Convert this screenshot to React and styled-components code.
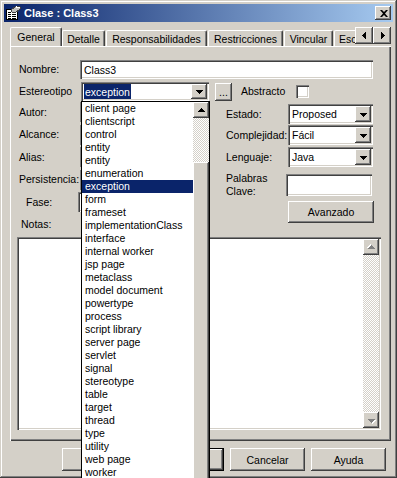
import React from "react";
import styled, { createGlobalStyle, css } from "styled-components";

const face = "#d4d0c8";

const GlobalStyle = createGlobalStyle`
  html, body { margin: 0; padding: 0; background: ${face}; }
  body {
    font-family: "Liberation Sans", Arial, sans-serif;
    font-size: 10.5px;
    color: #000;
  }
  * { box-sizing: border-box; }
`;

const raised = css`
  background: ${face};
  box-shadow: inset -1px -1px #404040, inset 1px 1px #fff, inset -2px -2px #808080;
`;

const sunken = css`
  background: #fff;
  box-shadow: inset 1px 1px #808080, inset 2px 2px #404040, inset -1px -1px #fff,
    inset -2px -2px ${face};
`;

const checker = css`
  background-color: #fff;
  background-image: conic-gradient(${face} 25%, #fff 0 50%, ${face} 0 75%, #fff 0);
  background-size: 2px 2px;
`;

const Window = styled.div`
  position: relative;
  width: 397px;
  height: 478px;
  padding: 4px;
  background: ${face};
  box-shadow: inset -1px -1px #404040, inset 1px 1px ${face}, inset -2px -2px #808080,
    inset 2px 2px #fff;
  overflow: hidden;
`;

const TitleBar = styled.div`
  height: 18px;
  display: flex;
  align-items: center;
  padding: 0 2px 0 1px;
  background: linear-gradient(90deg, #0a246a, #a6caf0);
`;

const Title = styled.span`
  flex: 1;
  margin-left: 3px;
  color: #fff;
  font-weight: bold;
  font-size: 11px;
  white-space: nowrap;
`;

const CloseBtn = styled.div`
  ${raised};
  width: 16px;
  height: 14px;
  display: flex;
  align-items: center;
  justify-content: center;
  padding-left: 1px;
`;

const Body = styled.div`
  padding-top: 5px;
`;

const TabRow = styled.div`
  display: flex;
  align-items: flex-start;
  height: 19px;
  margin-left: 6px;
  width: 382px;
  position: relative;
  z-index: 1;
`;

const TabStrip = styled.div`
  display: flex;
  align-items: flex-end;
  width: 345px;
  height: 19px;
  overflow: hidden;
`;

const Tab = styled.div`
  flex-shrink: 0;
  width: ${(p) => p.$w}px;
  height: ${(p) => (p.$active ? 20 : 16)}px;
  margin-bottom: ${(p) => (p.$active ? -1 : 0)}px;
  margin-right: ${(p) => (p.$active ? 0 : 1)}px;
  background: ${face};
  border-top: 1px solid #fff;
  border-left: 1px solid #fff;
  border-right: 1px solid #404040;
  border-radius: 2px 2px 0 0;
  box-shadow: inset -1px 0 #808080;
  display: flex;
  align-items: center;
  justify-content: ${(p) => (p.$clip ? "flex-start" : "center")};
  padding-left: ${(p) => (p.$clip ? 4 : 0)}px;
  padding-bottom: ${(p) => (p.$active ? 2 : 0)}px;
  white-space: nowrap;
`;

const ArrowPair = styled.div`
  display: flex;
`;

const SmallBtn = styled.div`
  ${raised};
  width: ${(p) => p.$w || 16}px;
  height: ${(p) => p.$h || 16}px;
  display: flex;
  align-items: center;
  justify-content: center;
  flex-shrink: 0;
`;

const Panel = styled.div`
  margin-left: 6px;
  width: 381px;
  height: 395px;
  padding: 14px 0 0 7px;
  background: ${face};
  box-shadow: inset 1px 1px #fff, inset -1px -1px #404040, inset -2px -2px #808080;
`;

const Row = styled.div`
  display: flex;
  align-items: center;
  height: ${(p) => p.$h || 20}px;
  margin-top: ${(p) => p.$mt || 0}px;
  margin-left: ${(p) => p.$ml || 0}px;
`;

const Label = styled.span`
  flex-shrink: 0;
  width: ${(p) => p.$w}px;
  padding-left: ${(p) => p.$pl || 0}px;
  white-space: nowrap;
  line-height: 13px;
`;

const TextBox = styled.div`
  ${sunken};
  width: ${(p) => p.$w}px;
  height: ${(p) => p.$h || 20}px;
  padding: 0 4px;
  display: flex;
  align-items: center;
  flex-shrink: 0;
`;

const Combo = styled.div`
  ${sunken};
  width: ${(p) => p.$w}px;
  height: ${(p) => p.$h || 20}px;
  padding: 2px;
  display: flex;
  align-items: stretch;
  flex-shrink: 0;
`;

const ComboText = styled.span`
  flex: 1;
  display: flex;
  align-items: center;
  padding-left: 2px;
`;

const Selected = styled.span`
  background: #0a246a;
  color: #fff;
  height: 100%;
  display: flex;
  align-items: center;
  padding: 0 1px;
  margin-left: -1px;
`;

const DropBtn = styled.div`
  ${raised};
  width: 16px;
  display: flex;
  align-items: center;
  justify-content: center;
`;

const Button = styled.div`
  ${raised};
  width: ${(p) => p.$w || 75}px;
  height: ${(p) => p.$h || 23}px;
  display: flex;
  align-items: center;
  justify-content: center;
  flex-shrink: 0;
  margin-left: ${(p) => p.$ml || 0}px;
  ${(p) =>
    p.$default &&
    css`
      box-shadow: inset 0 0 0 1px #000, inset -2px -2px #404040, inset 2px 2px #fff,
        inset -3px -3px #808080;
    `}
`;

const CheckBox = styled.div`
  ${sunken};
  width: 13px;
  height: 13px;
`;

const Middle = styled.div`
  display: flex;
  height: 134px;
  margin-top: 1px;
`;

const LeftCol = styled.div`
  width: 203px;
  display: grid;
  grid-auto-rows: 20px;
  row-gap: 2.6px;
  align-items: center;
`;

const RightCol = styled.div`
  margin-left: 6px;
  padding-top: 2px;
  display: flex;
  flex-direction: column;
`;

const Notes = styled.div`
  ${sunken};
  width: 364px;
  height: 193px;
  margin-top: 1px;
  padding: 2px;
  display: flex;
  justify-content: flex-end;
`;

const ScrollCol = styled.div`
  width: 16px;
  display: flex;
  flex-direction: column;
`;

const Track = styled.div`
  ${checker};
  height: ${(p) => (p.$h ? `${p.$h}px` : "auto")};
  flex: ${(p) => (p.$h ? "none" : 1)};
`;

const Thumb = styled.div`
  ${raised};
  flex: 1;
`;

const ButtonRow = styled.div`
  display: flex;
  justify-content: flex-end;
  gap: 6px;
  margin-top: 7px;
  padding-right: 7px;
`;

const DropList = styled.div`
  position: absolute;
  left: 81px;
  top: 101px;
  width: 129px;
  height: 390px;
  border: 1px solid #000;
  background: #fff;
  display: flex;
  z-index: 5;
`;

const Items = styled.div`
  flex: 1;
`;

const Item = styled.div`
  height: 13px;
  line-height: 13px;
  padding-left: 3px;
  white-space: nowrap;
  ${(p) =>
    p.$sel &&
    css`
      background: #0a246a;
      color: #fff;
    `}
`;

const TriSvg = styled.svg`
  display: block;
  transform: rotate(${(p) => p.$rot}deg);
  ${(p) => p.$dim && "filter: drop-shadow(1px 1px 0 #fff);"}
`;

function Tri({ dir = "down", dim }) {
  const rot = { down: 0, up: 180, left: 90, right: -90 }[dir];
  return (
    <TriSvg width="7" height="7" viewBox="0 0 7 7" $rot={rot} $dim={dim}>
      <path
        d="M0 2h7v1h-1v1h-1v1h-1v1h-1v-1h-1v-1h-1v-1h-1z"
        fill={dim ? "#808080" : "#000"}
        shapeRendering="crispEdges"
      />
    </TriSvg>
  );
}

function AppIcon() {
  return (
    <svg width="16" height="16" viewBox="0 0 16 16" shapeRendering="crispEdges">
      <rect x="1.5" y="4.5" width="11" height="10" fill="#fff" stroke="#000" />
      <path d="M3 7h3M7 7h4M3 9h3M7 9h4M3 11h3M7 11h4M3 13h3M7 13h4" stroke="#000" />
      <path d="M6 5 L11 1 L15 2 L15 4 L10 8 L7 7 Z" fill="#c0c0c0" stroke="#404040" />
      <path d="M11 1 L12 3 L15 2" fill="none" stroke="#fff" />
    </svg>
  );
}

function CloseX() {
  return (
    <svg width="8" height="7" viewBox="0 0 8 7">
      <path d="M0 0h2l2 2 2-2h2L5 3.5 8 7H6L4 5 2 7H0l3-3.5z" fill="#000" />
    </svg>
  );
}

const tabs = [
  { t: "General", w: 52, active: true },
  { t: "Detalle", w: 43 },
  { t: "Responsabilidades", w: 101 },
  { t: "Restricciones", w: 75 },
  { t: "Vincular", w: 49 },
  { t: "Esc", w: 60, clip: true },
];

const stereotypes = [
  "client page",
  "clientscript",
  "control",
  "entity",
  "entity",
  "enumeration",
  "exception",
  "form",
  "frameset",
  "implementationClass",
  "interface",
  "internal worker",
  "jsp page",
  "metaclass",
  "model document",
  "powertype",
  "process",
  "script library",
  "server page",
  "servlet",
  "signal",
  "stereotype",
  "table",
  "target",
  "thread",
  "type",
  "utility",
  "web page",
  "worker",
];

function ComboBox({ w, h, value, sel }) {
  return (
    <Combo $w={w} $h={h}>
      <ComboText>{sel ? <Selected>{value}</Selected> : value}</ComboText>
      <DropBtn>
        <Tri dir="down" />
      </DropBtn>
    </Combo>
  );
}

export default function App() {
  return (
    <>
      <GlobalStyle />
      <Window>
        <TitleBar>
          <AppIcon />
          <Title>Clase : Class3</Title>
          <CloseBtn>
            <CloseX />
          </CloseBtn>
        </TitleBar>

        <Body>
          <TabRow>
            <TabStrip>
              {tabs.map((tab) => (
                <Tab key={tab.t} $w={tab.w} $active={tab.active} $clip={tab.clip}>
                  {tab.t}
                </Tab>
              ))}
            </TabStrip>
            <ArrowPair>
              <SmallBtn $w={18} $h={17}>
                <Tri dir="left" />
              </SmallBtn>
              <SmallBtn $w={18} $h={17}>
                <Tri dir="right" />
              </SmallBtn>
            </ArrowPair>
          </TabRow>

          <Panel>
            <Row $h={19}>
              <Label $w={63} $pl={2}>Nombre:</Label>
              <TextBox $w={293} $h={19}>Class3</TextBox>
            </Row>

            <Row $h={19} $mt={3}>
              <Label $w={64} $pl={2}>Estereotipo</Label>
              <ComboBox w={128} h={19} value="exception" sel />
              <Button $w={17} $h={18} $ml={6}>...</Button>
              <Label $w={64} $pl={9}>Abstracto</Label>
              <CheckBox />
            </Row>

            <Middle>
              <LeftCol>
                <Row>
                  <Label $w={63} $pl={2}>Autor:</Label>
                  <TextBox $w={130} />
                </Row>
                <Row>
                  <Label $w={63} $pl={2}>Alcance:</Label>
                  <ComboBox w={130} value="" />
                </Row>
                <Row>
                  <Label $w={63} $pl={2}>Alias:</Label>
                  <TextBox $w={130} />
                </Row>
                <Row>
                  <Label $w={63} $pl={2}>Persistencia:</Label>
                  <ComboBox w={130} value="" />
                </Row>
                <Row>
                  <Label $w={61} $pl={9}>Fase:</Label>
                  <TextBox $w={130} />
                </Row>
                <Row>
                  <Label $w={63} $pl={4}>Notas:</Label>
                </Row>
              </LeftCol>

              <RightCol>
                <Row>
                  <Label $w={62}>Estado:</Label>
                  <ComboBox w={85} value="Proposed" />
                </Row>
                <Row $mt={1}>
                  <Label $w={62}>Complejidad:</Label>
                  <ComboBox w={85} value="Fácil" />
                </Row>
                <Row $mt={2}>
                  <Label $w={62}>Lenguaje:</Label>
                  <ComboBox w={85} value="Java" />
                </Row>
                <Row $mt={7} $h={22}>
                  <Label $w={60}>
                    Palabras
                    <br />
                    Clave:
                  </Label>
                  <TextBox $w={86} $h={22} />
                </Row>
                <Row $mt={5} $h={22} $ml={62}>
                  <Button $w={86} $h={22}>Avanzado</Button>
                </Row>
              </RightCol>
            </Middle>

            <Notes>
              <ScrollCol>
                <SmallBtn>
                  <Tri dir="up" dim />
                </SmallBtn>
                <Track />
                <SmallBtn>
                  <Tri dir="down" dim />
                </SmallBtn>
              </ScrollCol>
            </Notes>
          </Panel>

          <ButtonRow>
            <Button $w={81} />
            <Button $default />
            <Button>Cancelar</Button>
            <Button>Ayuda</Button>
          </ButtonRow>
        </Body>

        <DropList>
          <Items>
            {stereotypes.map((s, i) => (
              <Item key={i} $sel={s === "exception"}>
                {s}
              </Item>
            ))}
          </Items>
          <ScrollCol>
            <SmallBtn>
              <Tri dir="up" />
            </SmallBtn>
            <Track $h={44} />
            <Thumb />
          </ScrollCol>
        </DropList>
      </Window>
    </>
  );
}
